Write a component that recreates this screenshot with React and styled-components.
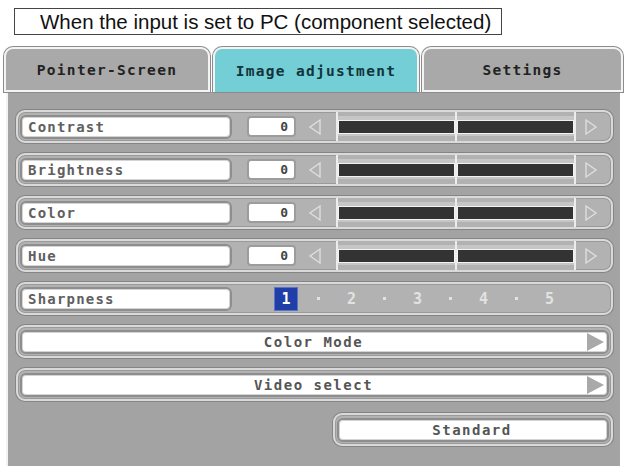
import React from 'react'
import styled, {createGlobalStyle} from 'styled-components'

const Global=createGlobalStyle`
  body{margin:0;background:#fff;}
`

const Page=styled.div`
  width:626px;
  height:468px;
  padding-top:8px;
  box-sizing:border-box;
  overflow:hidden;
`

const Title=styled.div`
  margin-left:14px;
  width:488px;
  height:27px;
  box-sizing:border-box;
  border:1px solid #444;
  padding-left:25px;
  font-family:"Liberation Sans",Arial,sans-serif;
  font-size:20.5px;
  line-height:25px;
  color:#111;
  white-space:nowrap;
`

const TabBar=styled.div`
  margin-top:12px;
  margin-left:4px;
  width:619px;
  display:grid;
  grid-template-columns:206px 206px 201px;
  column-gap:3px;
  height:45px;
`

const Tab=styled.div`
  box-sizing:border-box;
  border-radius:9px 9px 0 0;
  border:2px solid #f4f4f4;
  border-bottom:${p=>p.active?'none':'2px solid #f4f4f4'};
  box-shadow:0 0 0 1px #8c8c8c;
  background:${p=>p.active?'#74ced6':'#a9a9a9'};
  display:flex;
  align-items:center;
  justify-content:center;
  font-family:"DejaVu Sans Mono",monospace;
  font-weight:bold;
  font-size:14.5px;
  letter-spacing:1.3px;
  color:${p=>p.active?'#12343a':'#222'};
`

const Panel=styled.div`
  margin-left:6px;
  width:614px;
  height:374px;
  box-sizing:border-box;
  background:#a3a3a3;
  border-left:2px solid #f2f2f2;
  padding:18px 7px 0 8px;
  display:flex;
  flex-direction:column;
  gap:10px;
`

const Row=styled.div`
  height:33px;
  box-sizing:border-box;
  border-radius:9px;
  border:2px solid #d9d9d9;
  box-shadow:0 0 0 1px #858585, inset 0 0 0 1px #9a9a9a;
  background:#b2b2b2;
  display:flex;
  align-items:center;
  padding:0 2px;
  flex-shrink:0;
`

const Label=styled.div`
  width:212px;
  height:24px;
  box-sizing:border-box;
  background:#fff;
  border-radius:6px;
  border:2px solid #8e8e8e;
  box-shadow:inset 0 0 0 1px #d4d4d4;
  padding-left:6px;
  display:flex;
  align-items:center;
  font-family:"DejaVu Sans Mono",monospace;
  font-weight:bold;
  font-size:14px;
  letter-spacing:1.2px;
  color:#606060;
`

const Value=styled.div`
  margin-left:15px;
  width:49px;
  height:21px;
  box-sizing:border-box;
  background:#fff;
  border:2px solid #9c9c9c;
  border-radius:4px;
  padding-right:6px;
  display:flex;
  align-items:center;
  justify-content:flex-end;
  font-family:"DejaVu Sans Mono",monospace;
  font-weight:bold;
  font-size:13px;
  color:#444;
`

const Arrow=styled.svg`
  margin-left:${p=>p.gap}px;
  flex-shrink:0;
`

const Slider=styled.div`
  margin-left:14px;
  width:240px;
  align-self:stretch;
  display:flex;
  align-items:center;
  background:linear-gradient(#b2b2b2 0,#b2b2b2 4px,#c6c6c6 4px,#c6c6c6 24px,#b2b2b2 24px);
`

const Tick=styled.div`
  width:2px;
  align-self:stretch;
  background:#ececec;
`

const Bar=styled.div`
  flex:1;
  height:14px;
  box-sizing:border-box;
  background:#333;
  border:1px solid #f2f2f2;
`

const Steps=styled.div`
  margin-left:42px;
  display:flex;
  align-items:center;
`

const Current=styled.div`
  width:24px;
  height:24px;
  margin-right:4px;
  box-sizing:border-box;
  background:#1f3ea8;
  border:1px solid #5a74c8;
  display:flex;
  align-items:center;
  justify-content:center;
  font-family:"DejaVu Sans Mono",monospace;
  font-weight:bold;
  font-size:15px;
  color:#fff;
`

const Step=styled.div`
  width:33px;
  display:flex;
  justify-content:center;
  font-family:"DejaVu Sans Mono",monospace;
  font-weight:bold;
  font-size:15px;
  color:#e2e2e2;
`

const Dot=styled.div`
  width:3px;
  height:3px;
  background:#e2e2e2;
`

const Wide=styled.div`
  flex:1;
  height:24px;
  box-sizing:border-box;
  background:#fff;
  border-radius:6px;
  border:2px solid #8e8e8e;
  box-shadow:inset 0 0 0 1px #d4d4d4;
  display:flex;
  align-items:center;
  padding-right:2px;
  font-family:"DejaVu Sans Mono",monospace;
  font-weight:bold;
  font-size:14px;
  letter-spacing:1.5px;
  color:#555;
`

const WideText=styled.span`
  flex:1;
  text-align:center;
  padding-left:${p=>p.pad||0}px;
`

const Standard=styled(Row)`
  align-self:flex-end;
  width:280px;
  margin-top:2px;
`

const LeftArrow=()=>
<Arrow gap={12} width='14' height='18' viewBox='0 0 14 18'>
  <path d='M12 2 L2 9 L12 16 Z' fill='none' stroke='#dedede' strokeWidth='1.4'/>
</Arrow>

const RightArrow=()=>
<Arrow gap={8} width='14' height='18' viewBox='0 0 14 18'>
  <path d='M2 2 L12 9 L2 16 Z' fill='none' stroke='#dedede' strokeWidth='1.4'/>
</Arrow>

const Go=()=>
<svg width='20' height='20' viewBox='0 0 20 20'>
  <path d='M2 1 L19 10 L2 19 Z' fill='#a9a9a9'/>
</svg>

const sliders=['Contrast','Brightness','Color','Hue']

export default
()=>
<Page>
  <Global/>
  <Title>When the input is set to PC (component selected)</Title>
  <TabBar>
    <Tab>Pointer-Screen</Tab>
    <Tab active>Image adjustment</Tab>
    <Tab>Settings</Tab>
  </TabBar>
  <Panel>
    {sliders.map(name=>
      <Row key={name}>
        <Label>{name}</Label>
        <Value>0</Value>
        <LeftArrow/>
        <Slider>
          <Tick/><Bar/><Tick/><Bar/><Tick/>
        </Slider>
        <RightArrow/>
      </Row>
    )}
    <Row>
      <Label>Sharpness</Label>
      <Steps>
        <Current>1</Current>
        {['2','3','4','5'].map(n=>
          <React.Fragment key={n}>
            <Step><Dot/></Step>
            <Step>{n}</Step>
          </React.Fragment>
        )}
      </Steps>
    </Row>
    <Row>
      <Wide><WideText pad={20}>Color Mode</WideText><Go/></Wide>
    </Row>
    <Row>
      <Wide><WideText pad={20}>Video select</WideText><Go/></Wide>
    </Row>
    <Standard>
      <Wide><WideText>Standard</WideText></Wide>
    </Standard>
  </Panel>
</Page>
